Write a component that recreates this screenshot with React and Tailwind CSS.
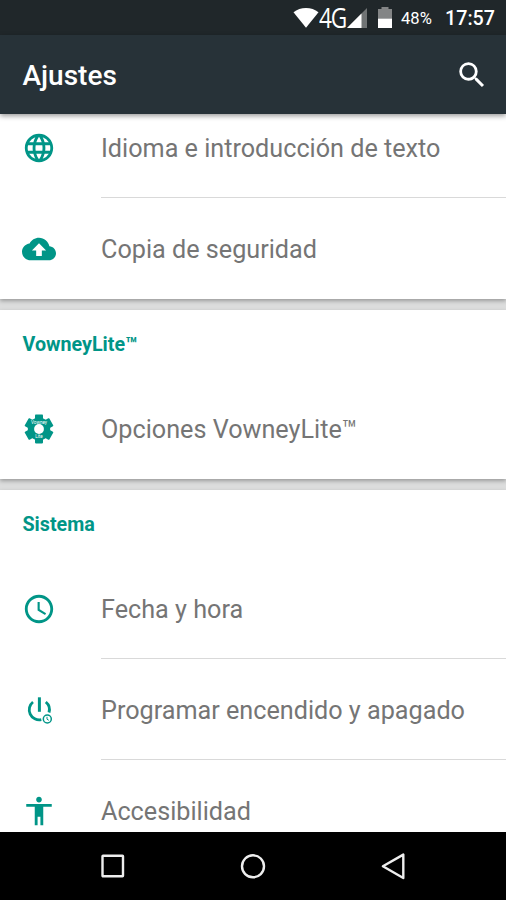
const LanguageIcon = () => (
  <svg viewBox="0 0 24 24" className="w-[34px] h-[34px]" fill="currentColor">
    <path d="M11.99 2C6.47 2 2 6.48 2 12s4.47 10 9.99 10C17.52 22 22 17.52 22 12S17.52 2 11.99 2zm6.93 6h-2.95a15.65 15.65 0 00-1.38-3.56A8.03 8.03 0 0118.92 8zM12 4.04c.83 1.2 1.48 2.53 1.91 3.96h-3.82c.43-1.43 1.08-2.76 1.91-3.96zM4.26 14C4.1 13.36 4 12.69 4 12s.1-1.36.26-2h3.38c-.08.66-.14 1.32-.14 2s.06 1.34.14 2H4.26zm.82 2h2.95c.32 1.25.78 2.45 1.38 3.56A7.987 7.987 0 015.08 16zm2.95-8H5.08a7.987 7.987 0 014.33-3.56A15.65 15.65 0 008.03 8zM12 19.96c-.83-1.2-1.48-2.53-1.91-3.96h3.82c-.43 1.43-1.08 2.76-1.91 3.96zM14.34 14H9.66c-.09-.66-.16-1.32-.16-2s.07-1.35.16-2h4.68c.09.65.16 1.32.16 2s-.07 1.34-.16 2zm.25 5.56c.6-1.11 1.06-2.31 1.38-3.56h2.95a8.03 8.03 0 01-4.33 3.56zM16.36 14c.08-.66.14-1.32.14-2s-.06-1.34-.14-2h3.38c.16.64.26 1.31.26 2s-.1 1.36-.26 2h-3.38z" />
  </svg>
);

const BackupIcon = () => (
  <svg viewBox="0 0 24 24" className="w-[34px] h-[34px]" fill="currentColor">
    <path d="M19.35 10.04C18.67 6.59 15.64 4 12 4 9.11 4 6.6 5.64 5.35 8.04 2.34 8.36 0 10.91 0 14c0 3.31 2.69 6 6 6h13c2.76 0 5-2.24 5-5 0-2.64-2.05-4.78-4.65-4.96zM14 13v4h-4v-4H7l5-5 5 5h-3z" />
  </svg>
);

const VowneyIcon = () => (
  <svg viewBox="0 0 34 34" className="w-[34px] h-[34px]">
    <g fill="currentColor">
      <circle cx="17" cy="17" r="11.2" />
      <rect x="13" y="2.6" width="8" height="28.8" rx="0.8" />
      <rect x="12.4" y="2.8" width="9.2" height="28.4" rx="0.8" transform="rotate(60 17 17)" />
      <rect x="12.4" y="2.8" width="9.2" height="28.4" rx="0.8" transform="rotate(120 17 17)" />
    </g>
    <circle cx="17" cy="17" r="4.9" fill="#fff" />
    <g fill="#fff" fontFamily="Roboto, sans-serif" fontSize="4.6" textAnchor="middle">
      <text x="17" y="11.8">Vowney</text>
      <text x="17" y="26.2">Lite</text>
    </g>
  </svg>
);

const ClockIcon = () => (
  <svg viewBox="0 0 24 24" className="w-[34px] h-[34px]" fill="currentColor">
    <path d="M11.99 2C6.47 2 2 6.48 2 12s4.47 10 9.99 10C17.52 22 22 17.52 22 12S17.52 2 11.99 2zM12 20c-4.42 0-8-3.58-8-8s3.58-8 8-8 8 3.58 8 8-3.58 8-8 8z" />
    <path d="M12.5 7H11v6l5.25 3.15.75-1.23-4.5-2.67z" />
  </svg>
);

const PowerIcon = () => (
  <svg viewBox="0 0 34 34" className="w-[34px] h-[34px]" fill="none" stroke="currentColor">
    <path d="M11 9A10 10 0 0 0 19.3 26.6M23.8 9A10 10 0 0 1 27 19.5" strokeWidth="2.8" />
    <path d="M17.4 4.3V18.8" strokeWidth="3" />
    <circle cx="25.3" cy="26" r="4" strokeWidth="1.5" />
    <path d="M25 23.8v2.4l1.8 1.1" strokeWidth="1" />
  </svg>
);

const AccessibilityIcon = () => (
  <svg viewBox="0 0 24 24" className="w-[34px] h-[34px]" fill="currentColor">
    <path d="M12 2c1.1 0 2 .9 2 2s-.9 2-2 2-2-.9-2-2 .9-2 2-2zm9 7h-6v13h-2v-6h-2v6H9V9H3V7h18v2z" />
  </svg>
);

const sections = [
  {
    items: [
      { label: "Idioma e introducción de texto", icon: LanguageIcon },
      { label: "Copia de seguridad", icon: BackupIcon },
    ],
  },
  {
    title: "VowneyLite™",
    items: [{ label: "Opciones VowneyLite™", icon: VowneyIcon }],
  },
  {
    title: "Sistema",
    items: [
      { label: "Fecha y hora", icon: ClockIcon },
      { label: "Programar encendido y apagado", icon: PowerIcon },
      { label: "Accesibilidad", icon: AccessibilityIcon },
    ],
  },
];

const StatusBar = () => (
  <div className="h-[35px] shrink-0 bg-[#20272a] flex items-center text-white pr-[11px]">
    <svg viewBox="0 0 26 20" className="w-[26px] h-5 ml-auto" fill="#fff">
      <path d="M13 19.8.5 4.2C4 1.5 8.3 0 13 0s9 1.5 12.5 4.2z" />
    </svg>
    <span className="font-['Open_Sans',sans-serif] text-[27px] leading-none tracking-[-1.5px] w-[28px] whitespace-nowrap">
      <span className="inline-block origin-left scale-x-[0.84]">4G</span>
    </span>
    <svg viewBox="0 0 20 20" className="w-5 h-5">
      <path d="M20 0v20H0z" fill="#707475" />
      <path d="M14.5 5.5V20H0z" fill="#fff" />
    </svg>
    <svg viewBox="0 0 14 21" className="w-3.5 h-[21px] ml-[11px]">
      <path d="M0 2h3.5V0h7v2H14v9.5H0z" fill="#838586" />
      <path d="M0 11.5h14V21H0z" fill="#fff" />
    </svg>
    <span className="ml-[9px] w-[33px] text-[16.6px] leading-none whitespace-nowrap pt-[3px]">48%</span>
    <span className="ml-[11px] text-[19.7px] font-medium leading-none pt-0.5">17:57</span>
  </div>
);

const Header = () => (
  <header className="relative z-10 h-[79px] shrink-0 bg-[#273238] flex items-center justify-between pl-[22.5px] pr-[17px] text-white shadow-[0_2px_5px_rgba(0,0,0,0.4)]">
    <h1 className="text-[28px] font-medium leading-none pt-[3px]">Ajustes</h1>
    <svg viewBox="0 0 24 24" className="w-[34px] h-[34px]" fill="#fff">
      <path d="M15.5 14h-.79l-.28-.27A6.47 6.47 0 0016 9.5 6.5 6.5 0 109.5 16c1.61 0 3.09-.59 4.23-1.57l.27.28v.79l5 4.99L20.49 19l-4.99-5zm-6 0C7.01 14 5 11.99 5 9.5S7.01 5 9.5 5 14 7.01 14 9.5 11.99 14 9.5 14z" />
    </svg>
  </header>
);

const Row = ({ item, divider }) => {
  const Icon = item.icon;
  return (
    <div className="h-[101px] flex pl-[22px]">
      <div className="w-[79px] h-[101px] flex items-center text-[#009587]">
        <Icon />
      </div>
      <div
        className={`flex-1 flex items-center border-b pt-[3px] ${
          divider ? "border-[#d9d9d9]" : "border-transparent"
        }`}
      >
        <span className="text-[25.2px] leading-none text-[#757575] whitespace-nowrap">
          {item.label}
        </span>
      </div>
    </div>
  );
};

const NavBar = () => (
  <nav className="h-[68px] shrink-0 bg-black flex items-center justify-center gap-[112.5px]">
    <svg viewBox="0 0 28 28" className="w-7 h-7" fill="none" stroke="#eee" strokeWidth="2.4">
      <rect x="3.5" y="3.8" width="20.5" height="20.5" rx="0.5" />
    </svg>
    <svg viewBox="0 0 28 28" className="w-7 h-7" fill="none" stroke="#eee" strokeWidth="2.4">
      <circle cx="14" cy="14.3" r="11" />
    </svg>
    <svg viewBox="0 0 28 28" className="w-7 h-7" fill="none" stroke="#eee" strokeWidth="2.4" strokeLinejoin="round">
      <path d="M23.3 2.6v23.4L2.9 14.3z" />
    </svg>
  </nav>
);

const App = () => {
  return (
    <div className="w-[506px] h-[900px] flex flex-col overflow-hidden bg-[#dcdddd] font-[Roboto,sans-serif]">
      <StatusBar />
      <Header />
      <main className="flex-1 min-h-0 overflow-hidden">
        {/* List is scrolled slightly under the header */}
        <div className="-mt-[17px] flex flex-col gap-[11px]">
          {sections.map((section, i) => (
            <section key={i} className="bg-white shadow-[0_2px_4px_rgba(0,0,0,0.3)]">
              {section.title && (
                <h2 className="h-[68px] flex items-center pl-[22.5px] pt-[2px] text-[19.7px] font-bold leading-none text-[#009587]">
                  {section.title}
                </h2>
              )}
              {section.items.map((item, j) => (
                <Row key={item.label} item={item} divider={j < section.items.length - 1} />
              ))}
            </section>
          ))}
        </div>
      </main>
      <NavBar />
    </div>
  );
};

export default App;
